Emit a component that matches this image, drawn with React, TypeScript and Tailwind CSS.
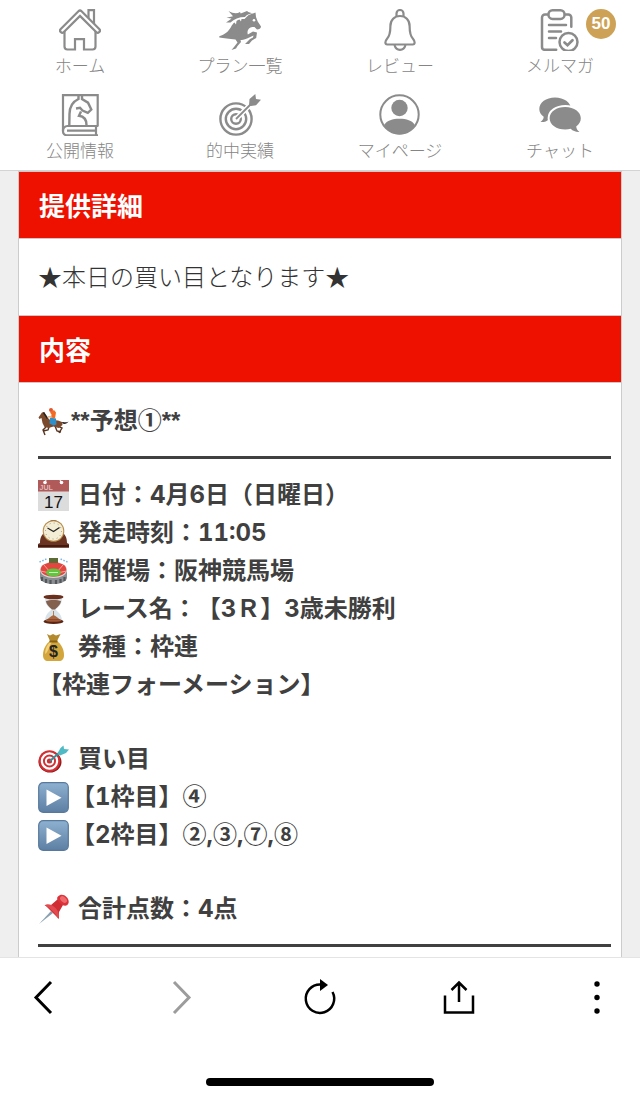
// src/App.tsx
import type { ReactNode } from "react";

const HomeIcon = () => (
  <svg viewBox="0 0 42 42" className="size-[42px]" fill="none" stroke="#8b8b8b" strokeWidth="2.200">
    <path d="M29.500 10V1.200h5.500v14" />
    <path d="M5.500 22v15.500a3 3 0 0 0 3 3H16V30.200h9v10.300h8.500a3 3 0 0 0 3-3V22" />
    <path d="M3.300 21.500 21 3.800 38.700 21.500" strokeWidth="6.600" strokeLinecap="round" strokeLinejoin="round" />
    <path d="M3.300 21.500 21 3.800 38.700 21.500" stroke="#fff" strokeWidth="2.200" strokeLinecap="round" strokeLinejoin="round" />
  </svg>
);

const HorseIcon = () => (
  <svg viewBox="0 0 42 42" className="size-[42px]" fill="#8b8b8b">
    <path d="M.3 27.200C6 25.500 9 23 12 18c1-2 2-3.500 3.500-4.500l1.500 2 .5-3.500c1-.7 2-1.200 3-1.500l1.500 2 .5-2.600h3L28 7.500c2-2.500 5-2.200 8.500-4L37 8l1.700 4.500L42 17.500c0 2-2 3-4 3L35.500 18c-3 0-5.500.5-6.500 3-.8 2-.5 3.500-.2 4.500l5.200-3 4 1-.8 5.500-4.200 2.500-3 3.500h-4l5-5 3-1.500.5-2-6.500 3c-3 1.500-5 1.500-6.500 1.500l.5 2-3.500 4-1.500 2.500-4.500 1.500 2.500-3 3.500-4.500-2-3C10 30 5 29.500.3 28.600z" />
    <path d="M11.500 13.500H7c2-1.500 4-2.500 5.500-4L7.500 8.700 14 7.200 9.500 2c5 2.800 8.500 2.800 11.500 1l.7 1.500L28 2c1.500 1.500 4 2 6 2-4 .8-6.500 1.800-8 4-6 0-11 2-14.500 5.500z" />
    <circle cx="35" cy="11.200" r="1.300" fill="#fff" />
  </svg>
);

const BellIcon = () => (
  <svg viewBox="0 0 42 42" className="size-[42px]" fill="none" stroke="#8b8b8b" strokeWidth="2.200" strokeLinejoin="round">
    <path d="M17.500 7.800V4.500a3.500 3.500 0 0 1 7 0v3.300" />
    <path d="M21 7c-5.500 0-9.600 4-9.600 10 0 7-1 10.500-3.500 13-2 2.200-2.200 5.500.4 5.500h25.400c2.600 0 2.400-3.300.4-5.500-2.500-2.500-3.500-6-3.500-13 0-6-4.100-10-9.600-10z" />
    <path d="M15.500 36c.8 3 3 4.800 5.500 4.800s4.700-1.800 5.500-4.800" />
  </svg>
);

const MailIcon = () => (
  <svg viewBox="0 0 42 42" className="size-[42px]" fill="none" stroke="#8b8b8b" strokeWidth="2.500" strokeLinecap="round">
    <path d="M8.500 5.500H6a3 3 0 0 0-3 3V38a2.800 2.800 0 0 0 2.800 2.800h11.400M26.500 5.500h2.800a3 3 0 0 1 3 3v9.300" />
    <rect x="9.500" y="1.300" width="16" height="8.600" rx="4" />
    <path d="M10 16h17M10 22.500h12M10 29h7" />
    <circle cx="29.500" cy="33" r="9" />
    <path d="m25.500 33.500 3 2.700 5-5" strokeWidth="2.700" />
  </svg>
);

const BookIcon = () => (
  <svg viewBox="0 0 42 42" className="size-[42px]" fill="none" stroke="#8b8b8b" strokeWidth="2.200">
    <path d="M39 1.100H4v36.400a3.800 3.800 0 0 0 3.800 3.800H39M38.700 0v32.500M37 32.500v8.800" />
    <path d="M4 37a4.500 4.500 0 0 1 4.500-5H39M8 36.700h28.500" />
    <path d="M19.500 1v4C13 8 10.500 13 10.500 20l-.2 11" strokeWidth="2.400" />
    <path d="M23 1v4l6 3.700 3.300 6.800-3.500 3.300-5.300-2.300-2.500-2.700-4 .7M22 17.500l-2 4.300c5 .7 7.500 3.200 7.500 9.200" strokeWidth="2.400" />
  </svg>
);

const TargetIcon = () => (
  <svg viewBox="0 0 42 42" className="size-[42px]" fill="none" stroke="#8b8b8b" strokeWidth="2.400">
    <circle cx="17" cy="25" r="15.600" />
    <circle cx="17" cy="25" r="10.200" />
    <circle cx="17" cy="25" r="4.800" />
    <path d="M17 25 33 9" stroke="#fff" strokeWidth="5" />
    <path d="M17 25 34 8" strokeWidth="1.800" />
    <path d="m30 11.500.5-6.500L36.300 0l.7 5 5 .7-5 5.600-5 .7z" fill="#8b8b8b" stroke="none" />
  </svg>
);

const UserIcon = () => (
  <svg viewBox="0 0 42 42" className="size-[42px]">
    <circle cx="20.500" cy="20.500" r="19.200" fill="none" stroke="#8b8b8b" strokeWidth="2" />
    <circle cx="20.500" cy="14" r="8.200" fill="#8b8b8b" />
    <path d="M5 31c3-4.500 8.500-6.200 15.500-6.200S33 26.500 36 31c-3.500 6-9 9.300-15.500 9.300S8.500 37 5 31z" fill="#8b8b8b" />
  </svg>
);

const ChatIcon = () => (
  <svg viewBox="0 0 42 42" className="size-[42px]" fill="#8b8b8b">
    <path d="M16 3.500c9 0 16 5 16 11.500S25 26 16 26c-2 0-4-.2-6-.8C7.500 27.500 5 28.300 1.500 28c2-1.500 3.200-3.200 3.200-5.200C1.700 20.700.3 18 .3 15 .3 8.500 7 3.500 16 3.500z" />
    <path d="M26.300 13c8.800 0 15.500 5 15.500 11.200 0 3.300-1.700 6.200-4.600 8.200.2 2 1.200 3.900 3.200 5.500-3.500.2-6.400-.8-8.700-3.100-1.700.5-3.500.7-5.400.7-8.800 0-15.700-4.900-15.700-11.300S17.500 13 26.300 13z" stroke="#fff" strokeWidth="4" paintOrder="stroke" />
  </svg>
);

const HorseRacing = () => (
  <svg viewBox="0 0 31 31" className="size-[31px] shrink-0">
    <path d="m8 21-3 3 2 5M11 21l-1 3-5 1M20 20l4 2-3 5M17 20l2 5 4 1" fill="none" stroke="#57331f" strokeWidth="1.400" />
    <path d="M24 16c3 0 4 1 6.500-.5-1 2-4 3-6 2z" fill="#2b211e" />
    <path d="M.5 11.500 4 6.500l2-.5 3 5 3 3 8 .5 4 1.500.5 3-4 3-5-1.500-5 1.500-4-1-2-4-1-5-2 1z" fill="#7b4a2c" />
    <path d="m5.500 6.500 4 6" stroke="#2b211e" strokeWidth="1.500" />
    <path d="m12 11.500 6 1 .5 6-3 1-4-2z" fill="#2e8fc9" />
    <path d="m12 6.500 4-2.500 2 2.500-1 6-4-1 .5-3z" fill="#f26b21" />
    <path d="m9.500 11 4-.5" stroke="#e8b88c" strokeWidth="1.300" />
    <circle cx="13" cy="4" r="2" fill="#e2562b" />
  </svg>
);

const Calendar = () => (
  <svg viewBox="0 0 31 31" className="size-[31px] shrink-0">
    <path d="M0 0h31v31H0z" fill="#dcdcdc" />
    <path d="M0 0h31v11.500H0z" fill="#b05a5a" />
    <circle cx="7" cy="2.500" r="1.800" fill="#fff" />
    <circle cx="23.500" cy="2.500" r="1.800" fill="#fff" />
    <path d="m7 3 1-3M23.500 3l-1.500-3" stroke="#fff" />
    <text x="1.500" y="10" fontSize="7" fontWeight="700" fill="#e3b8b8" fontFamily="Liberation Sans, sans-serif">JUL</text>
    <text x="15.500" y="28" fontSize="17" fontWeight="400" textAnchor="middle" fill="#111" fontFamily="Liberation Sans, sans-serif">17</text>
  </svg>
);

const Clock = () => (
  <svg viewBox="0 0 31 31" className="size-[31px] shrink-0">
    <path d="M0 29.500V26l2-1c0-6 2-8 4-10 1-8 4-13 9.500-13S24 7 25 15c2 2 4 4 4 10l2 1v3.500z" fill="#6a3322" />
    <path d="M0 27h31v2.500H0z" fill="#46190f" />
    <circle cx="15.500" cy="13" r="10.800" fill="#b98d4b" />
    <circle cx="15.500" cy="13" r="9.800" fill="#f4edd6" />
    <circle cx="15.500" cy="13" r="8" fill="none" stroke="#8d8470" strokeWidth="1" strokeDasharray=".8 3.390" />
    <path d="m9.500 10 6 3.500 6-4" fill="none" stroke="#222" strokeWidth="1.300" />
  </svg>
);

const Stadium = () => (
  <svg viewBox="0 0 31 31" className="size-[31px] shrink-0">
    <path d="M2 14v8c1 4 7 6 13.500 6S28 26 29 22v-8z" fill="#8b8e92" />
    <path d="M4 21v4M8 23v4M12.500 24v4M18 24v4M22.500 23v4M26.500 21v4" stroke="#54585c" strokeWidth="2.200" />
    <ellipse cx="15.500" cy="14" rx="13.500" ry="8" fill="#d9dadb" />
    <ellipse cx="15.500" cy="13.500" rx="12.800" ry="7.300" fill="#e2463f" />
    <path d="m6 9 6 7M25 9l-6 7M2.500 15l9 2M28.500 15l-9 2" stroke="#f6a09a" />
    <ellipse cx="15.500" cy="16.500" rx="7.500" ry="4" fill="#63c440" />
    <path d="M11 16.500h9" stroke="#c9f0b8" />
    <path d="M11 2h9v5h-9z" fill="#5c6b35" />
    <path d="m1.500 6 7-3M29.500 6l-7-3" stroke="#7cb5e6" strokeWidth="1.500" strokeDasharray="1.500 1.500" />
  </svg>
);

const Hourglass = () => (
  <svg viewBox="0 0 31 31" className="size-[31px] shrink-0">
    <path d="M7 4h17c0 7-3 8-6.500 11.500C21 19 24 21 24 27H7c0-6 3-8 6.500-11.500C10 12 7 11 7 4z" fill="#d9e4ea" />
    <path d="M8 7c3-1.500 12-1.500 15 0-.5 4-3.500 6-6 8.500h-3C11.500 13 8.500 11 8 7z" fill="#84604e" />
    <path d="M15.500 17v5" stroke="#b07f58" />
    <path d="M8 26c2-1 5-4 7.500-5 2.500 1 5.500 4 7.500 5z" fill="#a8683f" />
    <ellipse cx="15.500" cy="3" rx="10" ry="2.300" fill="#6b2f1c" />
    <ellipse cx="15.500" cy="27.500" rx="10" ry="2.500" fill="#5b2514" />
    <ellipse cx="15.500" cy="26.500" rx="8" ry="1.300" fill="#a35a36" />
  </svg>
);

const MoneyBag = () => (
  <svg viewBox="0 0 31 31" className="size-[31px] shrink-0">
    <path d="m9 2 3 1.500L15 2l3 1.500L22.500 2 19 9h-7z" fill="#b38a2c" />
    <path d="M12 9h7c4 3 7 8 7 14 0 4-2 6-5 6H10c-3 0-5-2-5-6 0-6 3-11 7-14z" fill="#d2a63c" />
    <path d="M12 10c-3 3-5 7-5 12 3-1 4-8 7-12z" fill="#f0d27a" />
    <path d="M11.500 8.500h8v2h-8z" fill="#8a6115" />
    <text x="15.500" y="25" fontSize="16" fontWeight="700" textAnchor="middle" fill="#242424" fontFamily="Liberation Sans, sans-serif">$</text>
  </svg>
);

const Dart = () => (
  <svg viewBox="0 0 31 31" className="size-[31px] shrink-0">
    <ellipse cx="12" cy="18" rx="11.500" ry="10.500" fill="#8e1a1c" />
    <circle cx="11.500" cy="17" r="10.800" fill="#d32f33" />
    <circle cx="11.500" cy="17" r="7.600" fill="none" stroke="#fff" strokeWidth="2.200" />
    <circle cx="11.500" cy="17" r="3.600" fill="none" stroke="#fff" strokeWidth="2" />
    <path d="m12 17 10-9" stroke="#33919b" strokeWidth="2" />
    <path d="m19.500 9.500 3-5.500 3-2.500.5 3.500 5 .5-3 3.500-6 2.500z" fill="#4fb9c4" />
  </svg>
);

const Play = () => (
  <svg viewBox="0 0 31 31" className="size-[31px] shrink-0">
    <defs>
      <linearGradient id="play" x2="0" y2="1">
        <stop stopColor="#8eb0d0" />
        <stop offset="1" stopColor="#5c7fa3" />
      </linearGradient>
    </defs>
    <rect x=".7" y=".7" width="29.600" height="29.600" rx="4.500" fill="url(#play)" stroke="#58799b" strokeWidth="1.200" />
    <path d="M8.500 7.500v16.500L23.500 15.700z" fill="#fff" />
  </svg>
);

const Pushpin = () => (
  <svg viewBox="0 0 31 31" className="size-[31px] shrink-0">
    <path d="m1 30 12-13 2 2z" fill="#8aa0b2" />
    <path d="m7 11 6 0 7-6 5 6-4 7v7z" fill="#cf2c33" />
    <path d="M6.500 11.500c3-2.500 8-.5 11 2.500s5 8 2.500 10.500c-1.500-3-3-5-6-8s-5-4-7.500-5z" fill="#e34a50" />
    <path d="M20 2.500c2.500-2.500 6-2 8.500.5s3 6 .8 8c-2 1.500-5 .5-7.500-2s-3.500-5-1.800-6.500z" fill="#dc3239" />
    <ellipse cx="25.500" cy="5.500" rx="4" ry="2.600" transform="rotate(45 25.500 5.500)" fill="#ee6a6d" />
  </svg>
);

const menu = [
  { label: "ホーム", icon: <HomeIcon /> },
  { label: "プラン一覧", icon: <HorseIcon /> },
  { label: "レビュー", icon: <BellIcon /> },
  { label: "メルマガ", icon: <MailIcon />, badge: 50 },
  { label: "公開情報", icon: <BookIcon /> },
  { label: "的中実績", icon: <TargetIcon /> },
  { label: "マイページ", icon: <UserIcon /> },
  { label: "チャット", icon: <ChatIcon /> },
];

const raceInfo = [
  { icon: <Calendar />, text: "日付：4月6日（日曜日）" },
  { icon: <Clock />, text: "発走時刻：11:05" },
  { icon: <Stadium />, text: "開催場：阪神競馬場" },
  { icon: <Hourglass />, text: "レース名：【3Ｒ】3歳未勝利" },
  { icon: <MoneyBag />, text: "券種：枠連" },
];

const Row = ({ icon, tight, children }: { icon: ReactNode; tight?: boolean; children: ReactNode }) => (
  <p className={tight ? "flex items-center gap-[2px]" : "flex items-center gap-[9px]"}>
    {icon}
    <span>{children}</span>
  </p>
);

const Circled = ({ children }: { children: ReactNode }) => (
  <span className="font-['Noto_Sans_CJK_JP',sans-serif] leading-6">{children}</span>
);

const Stars = () => <span className="font-['Liberation_Sans',sans-serif] leading-6">**</span>;

const Title = ({ children }: { children: ReactNode }) => (
  <h2 className="border-y border-[#d0c8c8] bg-[#ee1100] px-5 py-[14px] text-[26px] leading-[38px] font-bold text-white">
    {children}
  </h2>
);

const App = () => {
  return (
    <div className="flex min-h-screen flex-col bg-[#efefef] font-['Noto_Sans_CJK_JP',sans-serif]">
      {/* Menu */}
      <nav className="grid grid-cols-4 gap-y-[15px] border-b border-[#d4d4d4] bg-white pt-[9px] pb-[6px]">
        {menu.map((m) => (
          <a key={m.label} href="#" className="flex flex-col items-center text-[#858585]">
            <span className="relative">
              {m.icon}
              {m.badge && (
                <span className="absolute top-0 left-[47px] flex size-[30px] items-center justify-center rounded-full bg-[#cda256] font-['Liberation_Sans',sans-serif] text-[17px] font-bold text-white">
                  {m.badge}
                </span>
              )}
            </span>
            <span className="text-[17px] leading-7 font-light">{m.label}</span>
          </a>
        ))}
      </nav>

      {/* Detail */}
      <main className="mx-[18px] grow border-x border-[#ccc] bg-white text-2xl text-[#404040]">
        <Title>提供詳細</Title>
        <p className="px-[19px] pt-[18px] pb-5 leading-[38px] font-light text-[#333]">★本日の買い目となります★</p>
        <Title>内容</Title>
        <div className="pt-[19px] pr-[10px] pb-[10px] pl-[19px] font-['Inter','Noto_Sans_CJK_JP',sans-serif] leading-[38px] font-bold tabular-nums [text-spacing-trim:space-all]">
          <Row icon={<HorseRacing />} tight>
            <Stars />予想<Circled>①</Circled><Stars />
          </Row>
          <hr className="mt-4 mb-[17px] border-t-[3px] border-[#404040]" />
          <div className="flex flex-col gap-9">
            <div>
              {raceInfo.map((r) => (
                <Row key={r.text} icon={r.icon}>{r.text}</Row>
              ))}
              <p>【枠連フォーメーション】</p>
            </div>
            <div>
              <Row icon={<Dart />}>買い目</Row>
              <Row icon={<Play />} tight>【1枠目】<Circled>④</Circled></Row>
              <Row icon={<Play />} tight>
                【2枠目】<Circled>②</Circled>,<Circled>③</Circled>,<Circled>⑦</Circled>,<Circled>⑧</Circled>
              </Row>
            </div>
            <Row icon={<Pushpin />}>合計点数：4点</Row>
          </div>
          <hr className="mt-4 border-t-[3px] border-[#404040]" />
        </div>
      </main>

      {/* Browser bar */}
      <footer className="border-t border-[#e4e4e4] bg-white pb-[14px]">
        <div className="flex justify-between px-[21px] pt-[17px]">
          <button aria-label="戻る" className="flex size-11 items-center justify-center">
            <svg viewBox="0 0 44 44" fill="none" stroke="#000" strokeWidth="3">
              <path d="M30 7 15 22.500 30 38" />
            </svg>
          </button>
          <button aria-label="進む" className="flex size-11 items-center justify-center">
            <svg viewBox="0 0 44 44" fill="none" stroke="#9c9c9c" strokeWidth="3">
              <path d="m14 7 15 15.500L14 38" />
            </svg>
          </button>
          <button aria-label="再読み込み" className="flex size-11 items-center justify-center">
            <svg viewBox="0 0 44 44" fill="none" stroke="#000" strokeWidth="2.500">
              <path d="M22.500 9.500A14.200 14.200 0 1 0 34.500 17" />
              <path d="M22 4v12l8-6z" fill="#000" stroke="none" />
            </svg>
          </button>
          <button aria-label="共有" className="flex size-11 items-center justify-center">
            <svg viewBox="0 0 44 44" fill="none" stroke="#000" strokeWidth="2.500">
              <path d="M8 20.500v17h28v-17M22 27V8M14.500 15 22 7.500l7.500 7.500" />
            </svg>
          </button>
          <button aria-label="メニュー" className="flex size-11 items-center justify-center">
            <svg viewBox="0 0 44 44">
              <circle cx="22" cy="9" r="2.700" />
              <circle cx="22" cy="22.500" r="2.700" />
              <circle cx="22" cy="36" r="2.700" />
            </svg>
          </button>
        </div>
        <div className="mx-auto mt-[59px] h-2 w-[228px] rounded-full bg-black" />
      </footer>
    </div>
  );
};

export default App;
